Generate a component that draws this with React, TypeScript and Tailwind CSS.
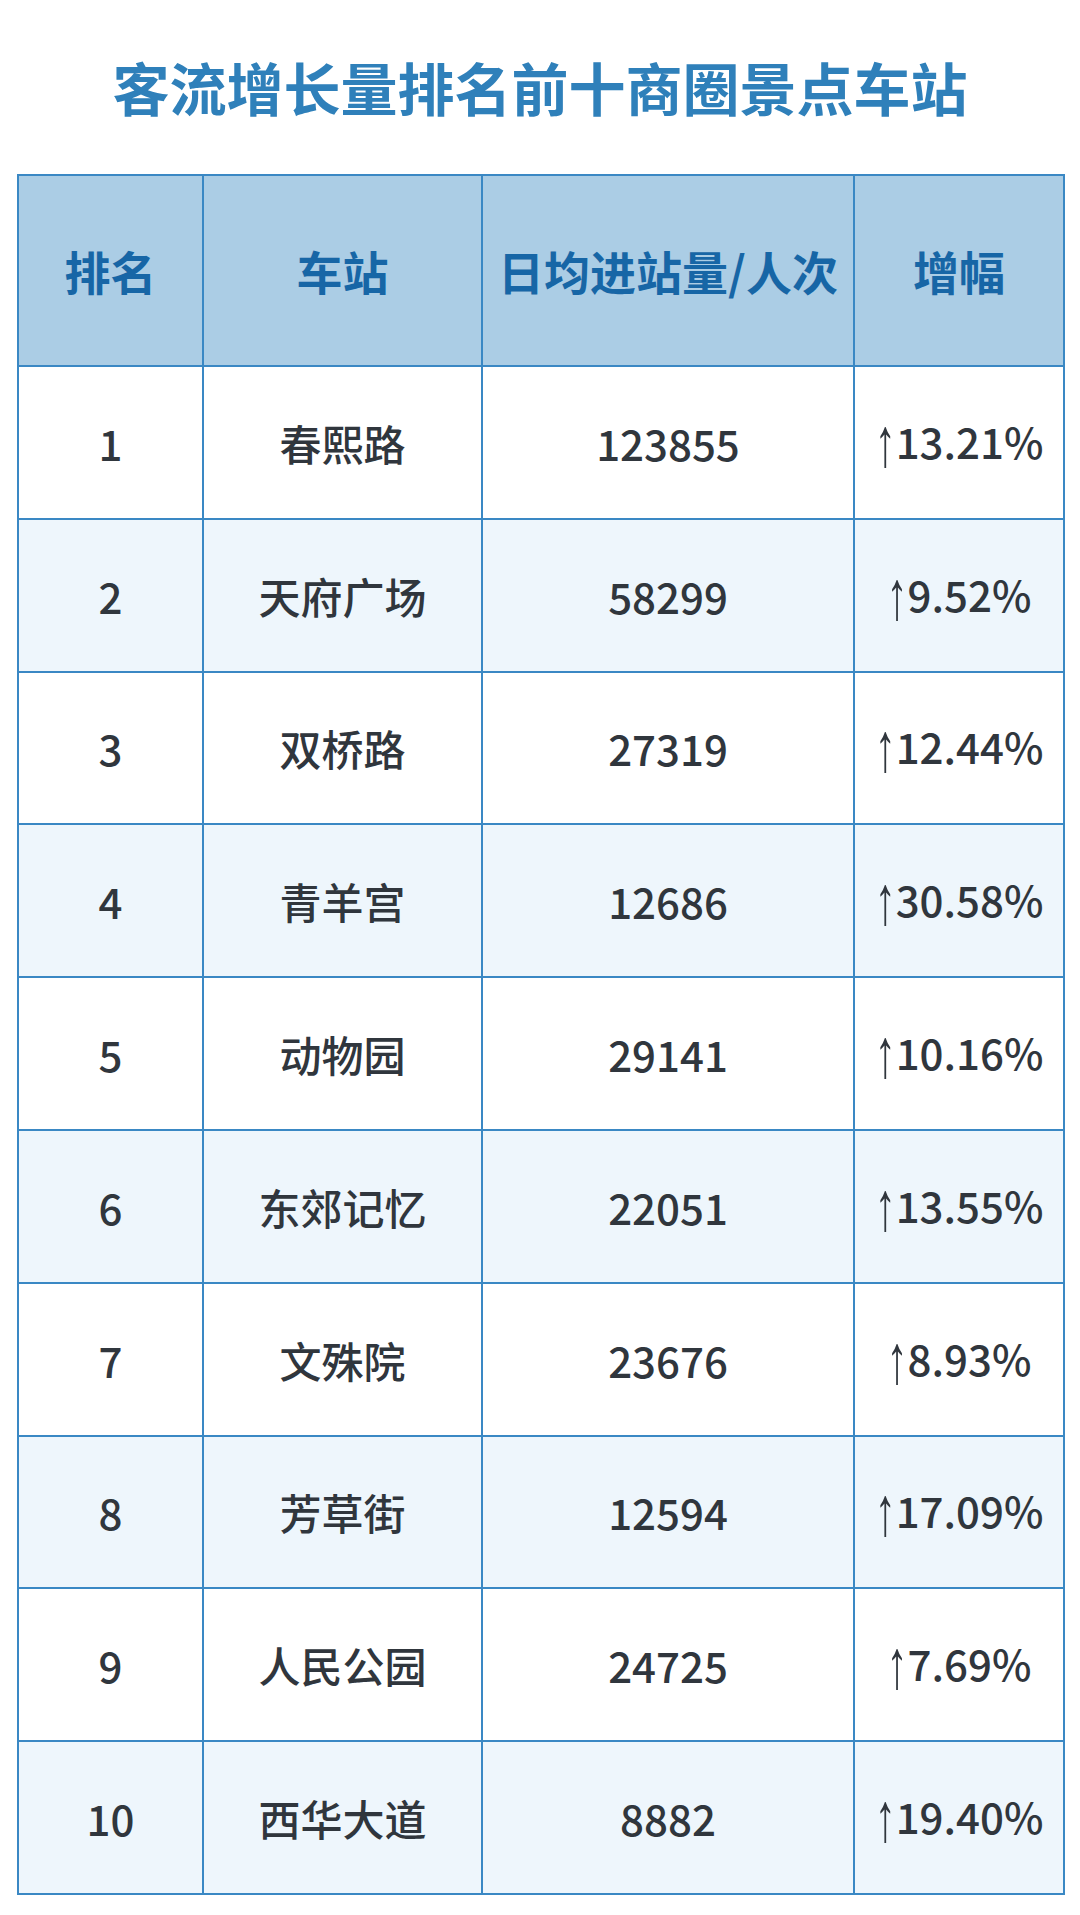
import React from "react";

const rows = [
  ["1", "春熙路", "123855", "13.21%"],
  ["2", "天府广场", "58299", "9.52%"],
  ["3", "双桥路", "27319", "12.44%"],
  ["4", "青羊宫", "12686", "30.58%"],
  ["5", "动物园", "29141", "10.16%"],
  ["6", "东郊记忆", "22051", "13.55%"],
  ["7", "文殊院", "23676", "8.93%"],
  ["8", "芳草街", "12594", "17.09%"],
  ["9", "人民公园", "24725", "7.69%"],
  ["10", "西华大道", "8882", "19.40%"],
];

const font = { fontFamily: '"Noto Sans CJK SC", "Noto Sans", sans-serif' };
const arrowFont = { fontFamily: '"Liberation Sans", Arial, sans-serif' };

export default function App() {
  return (
    <div className="w-[1080px] h-[1915px] bg-white" style={font}>
      <div className="h-[174px] pb-[2px] flex items-center justify-center">
        <h1 className="text-[57px] font-bold text-[#2f80ba] leading-none">
          客流增长量排名前十商圈景点车站
        </h1>
      </div>
      <table className="ml-[17px] w-[1046px] border-collapse table-fixed border-2 border-[#3a88c4]">
        <colgroup>
          <col className="w-[185px]" />
          <col className="w-[279px]" />
          <col className="w-[372px]" />
          <col className="w-[210px]" />
        </colgroup>
        <thead>
          <tr className="h-[191px] bg-[#abcde5]">
            {["排名", "车站", "日均进站量/人次", "增幅"].map((h) => (
              <th
                key={h}
                className="border-2 border-[#3a88c4] text-[46px] font-bold text-[#1766a6] text-center align-middle p-0 whitespace-nowrap"
              >
                {h}
              </th>
            ))}
          </tr>
        </thead>
        <tbody>
          {rows.map((r, i) => (
            <tr key={r[0]} className={`h-[152.8px] ${i % 2 === 1 ? "bg-[#eef6fc]" : "bg-white"}`}>
              <td className="border-2 border-[#3a88c4] text-center align-middle text-[42px] font-medium text-[#30363d] p-0">
                {r[0]}
              </td>
              <td className="border-2 border-[#3a88c4] text-center align-middle text-[42px] font-medium text-[#30363d] p-0">
                {r[1]}
              </td>
              <td className="border-2 border-[#3a88c4] text-center align-middle text-[42px] font-medium text-[#30363d] p-0">
                {r[2]}
              </td>
              <td className="border-2 border-[#3a88c4] text-center align-middle text-[42px] font-medium text-[#30363d] p-0 whitespace-nowrap">
                <span
                  className="inline-block font-normal scale-y-[1.65] -translate-y-[2px]"
                  style={arrowFont}
                >
                  ↑
                </span>
                {r[3]}
              </td>
            </tr>
          ))}
        </tbody>
      </table>
    </div>
  );
}
